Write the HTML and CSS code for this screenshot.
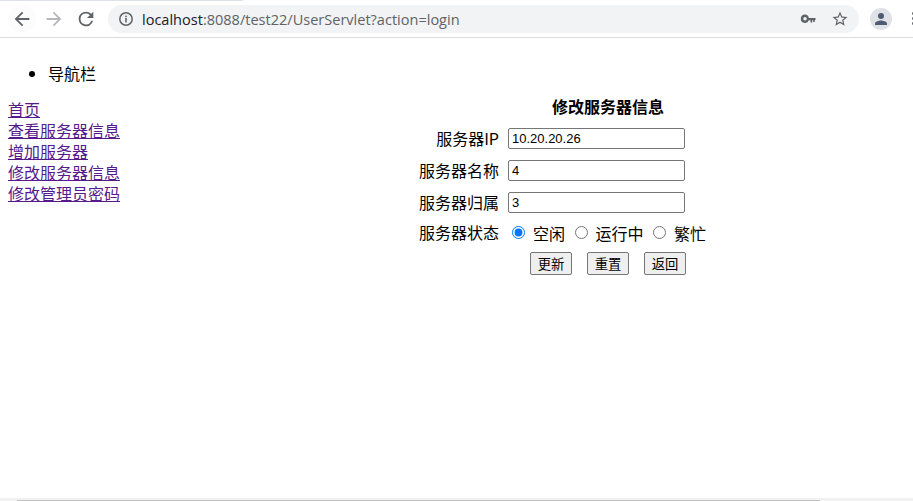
FILE: index.html
```html
<!DOCTYPE html>
<html lang="zh">
<head>
<meta charset="utf-8">
<title>修改服务器信息</title>
<link rel="stylesheet" href="styles.css">
</head>
<body>
<header class="toolbar">
  <div class="tab-edge"></div>
  <div class="nav-btn back">
    <svg width="24" height="24" viewBox="0 0 24 24"><path d="M20 11H7.83l5.59-5.59L12 4l-8 8 8 8 1.41-1.41L7.83 13H20z" fill="#5f6368"/></svg>
  </div>
  <div class="nav-btn">
    <svg width="24" height="24" viewBox="0 0 24 24"><path d="M20 11H7.83l5.59-5.59L12 4l-8 8 8 8 1.41-1.41L7.83 13H20z" fill="#b5b7ba" transform="rotate(180 12 12)"/></svg>
  </div>
  <div class="nav-btn reload">
    <svg width="24" height="24" viewBox="0 0 24 24"><path d="M17.65 6.35A7.96 7.96 0 0 0 12 4a8 8 0 1 0 7.73 10h-2.08A6 6 0 1 1 12 6c1.66 0 3.14.69 4.22 1.78L13 11h7V4z" fill="#5f6368"/></svg>
  </div>
  <div class="omnibox">
    <svg class="info" width="16" height="16" viewBox="0 0 16 16"><circle cx="8" cy="8" r="6.2" fill="none" stroke="#5f6368" stroke-width="1.5"/><rect x="7.2" y="7" width="1.6" height="4.4" fill="#5f6368"/><rect x="7.2" y="4.600" width="1.6" height="1.6" fill="#5f6368"/></svg>
    <span class="url"><span class="host">localhost</span>:8088/test22/UserServlet?action=login</span>
    <svg class="key" width="16" height="16" viewBox="0 0 16 16"><path fill-rule="evenodd" d="M5 3.500a4.200 4.200 0 1 0 3.900 5.800H10.500V11.500h1.700V9.300h1V11h1.600V9.300L16 7.900l-1-.9H8.900A4.200 4.200 0 0 0 5 3.500zM5 6a1.700 1.700 0 1 1 0 3.400A1.700 1.700 0 0 1 5 6z" fill="#5f6368"/></svg>
    <svg class="star" width="18" height="18" viewBox="0 0 24 24"><path d="M22 9.24l-7.19-.62L12 2 9.19 8.63 2 9.24l5.46 4.73L5.82 21 12 17.27 18.18 21l-1.63-7.03L22 9.24zM12 15.4l-3.76 2.27 1-4.28-3.32-2.88 4.38-.38L12 6.1l1.71 4.04 4.38.38-3.32 2.88 1 4.28L12 15.4z" fill="#5f6368"/></svg>
  </div>
  <div class="avatar">
    <svg width="22" height="22" viewBox="0 0 24 24"><circle cx="12" cy="8" r="4" fill="#4f5b73"/><path d="M4 20v-2c0-2.7 5.300-4 8-4s8 1.300 8 4v2z" fill="#4f5b73"/></svg>
  </div>
  <div class="menu-dots"><i></i><i></i><i></i></div>
</header>

<div class="page">
  <ul class="nav-title"><li>导航栏</li></ul>
  <div class="columns">
    <nav class="sidebar">
      <a href="#">首页</a>
      <a href="#">查看服务器信息</a>
      <a href="#">增加服务器</a>
      <a href="#">修改服务器信息</a>
      <a href="#">修改管理员密码</a>
    </nav>
    <main class="content">
      <form class="server-form">
        <h1 class="form-title">修改服务器信息</h1>
        <div class="row"><label class="label">服务器IP</label><input class="field" type="text" value="10.20.20.26"></div>
        <div class="row"><label class="label">服务器名称</label><input class="field" type="text" value="4"></div>
        <div class="row"><label class="label">服务器归属</label><input class="field" type="text" value="3"></div>
        <div class="row radios">
          <span class="label">服务器状态</span>
          <span class="radio-group">
            <input type="radio" name="s" checked><span class="radio-text">空闲</span>
            <input type="radio" name="s"><span class="radio-text">运行中</span>
            <input type="radio" name="s"><span class="radio-text">繁忙</span>
          </span>
        </div>
        <div class="buttons">
          <button type="button">更新</button>
          <button type="button">重置</button>
          <button type="button">返回</button>
        </div>
      </form>
    </main>
  </div>
</div>
<div class="scrollbar"><div class="thumb"></div></div>
</body>
</html>
```
FILE: styles.css
```css
html, body {
  margin: 0;
  height: 501px;
  overflow: hidden;
  background: #fff;
}
body {
  display: flex;
  flex-direction: column;
  font-family: "Noto Sans CJK SC", sans-serif;
  font-size: 16px;
  color: #000;
}
.toolbar {
  position: relative;
  flex: none;
  height: 37px;
  border-bottom: 1px solid #dadce0;
  display: flex;
  align-items: center;
  padding-left: 8px;
  overflow: hidden;
}
.tab-edge {
  position: absolute;
  left: 0;
  top: 0;
  width: 243px;
  height: 1px;
  background: #dee1e6;
}
.nav-btn {
  width: 28px;
  height: 28px;
  margin-right: 4px;
  display: flex;
  align-items: center;
  justify-content: center;
  flex: none;
}
.nav-btn svg { width: 22px; height: 22px; }
.back { background: #fcfcfc; border-radius: 50%; }
.omnibox {
  margin-left: 4px;
  width: 751px;
  height: 28px;
  background: #f1f3f4;
  border-radius: 14px;
  display: flex;
  align-items: center;
  flex: none;
}
.info { margin-left: 10px; flex: none; }
.url {
  margin-left: 8px;
  font-family: "Open Sans", sans-serif;
  font-size: 14.540px;
  color: #5f6368;
  white-space: nowrap;
  flex: 1;
}
.host { color: #202124; }
.key { flex: none; margin-right: 15px; }
.star { flex: none; margin-right: 10px; }
.avatar {
  flex: none;
  margin-left: 11px;
  width: 22px;
  height: 22px;
  background: #dee1e6;
  border-radius: 50%;
  display: flex;
  align-items: center;
  justify-content: center;
}
.avatar svg { width: 18px; height: 18px; }
.menu-dots {
  flex: none;
  margin-left: 20px;
  display: flex;
  flex-direction: column;
  gap: 2px;
}
.menu-dots i {
  display: block;
  width: 3px;
  height: 3px;
  background: #5f6368;
  border-radius: 50%;
}
.page {
  flex: 1;
  padding: 0 8px;
  min-height: 0;
}
.nav-title {
  margin: 24px 0 13px;
  padding-left: 40px;
  line-height: 23px;
}
.columns {
  display: flex;
  align-items: flex-start;
}
.sidebar {
  width: 400px;
  flex: none;
  display: flex;
  flex-direction: column;
  padding-top: 1px;
}
.sidebar a {
  color: #551a8b;
  text-decoration: underline;
  line-height: 21px;
}
.server-form {
  width: 320px;
}
.form-title {
  margin: -4px 0 10px;
  padding-left: 144px;
  font-size: 16px;
  font-weight: 700;
  line-height: 24px;
}
.row {
  display: flex;
  align-items: center;
  height: 21px;
  margin-bottom: 11px;
}
.label {
  flex: none;
  width: 91px;
  margin-right: 9px;
  text-align: right;
  white-space: nowrap;
  line-height: 21px;
}
.field {
  width: 177px;
  height: 21px;
  box-sizing: border-box;
  margin: 0;
  padding: 1px 3px;
  border: 1px solid #767676;
  border-radius: 2px;
  font-family: "Liberation Sans", sans-serif;
  font-size: 13px;
  color: #000;
  background: #fff;
}
.radios {
  margin-top: -2px;
  margin-bottom: 0;
}
.radio-group {
  display: flex;
  align-items: center;
  white-space: nowrap;
}
.radio-group input {
  margin: 0 0 0 4px;
  width: 13px;
  height: 13px;
  flex: none;
}
.radio-text {
  margin: 0 5.500px 0 8px;
}
.buttons {
  margin-top: 9px;
  padding-left: 122px;
  display: flex;
  gap: 15px;
}
.buttons button {
  width: 42px;
  height: 23px;
  padding: 0;
  font-family: "Noto Sans CJK SC", sans-serif;
  font-size: 13.333px;
  color: #000;
  background: #efefef;
  border: 1px solid #767676;
  border-radius: 2px;
}
.scrollbar {
  position: absolute;
  left: 0;
  right: 0;
  bottom: 0;
  height: 3px;
  background: #f1f1f1;
}
.thumb {
  position: absolute;
  left: 17px;
  top: 2px;
  width: 803px;
  height: 1px;
  background: #c1c1c1;
}
```
